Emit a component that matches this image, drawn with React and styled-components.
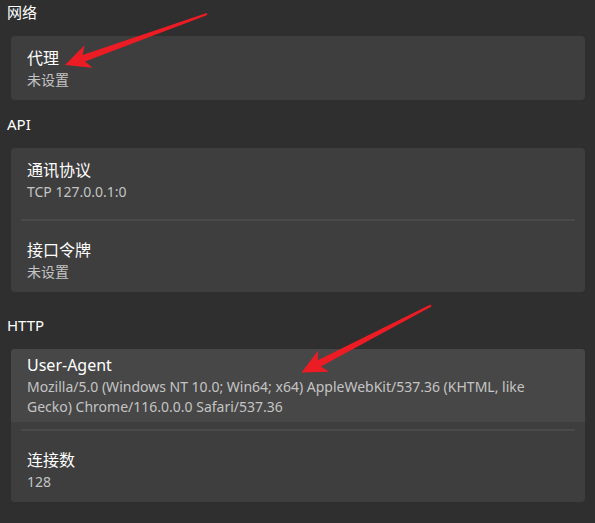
import styled, { createGlobalStyle } from 'styled-components'

const GlobalStyle = createGlobalStyle`
  html, body {
    margin: 0;
    padding: 0;
    background: #2f2f2f;
  }
  body {
    font-family: "Segoe UI", "Noto Sans", "Noto Sans CJK SC", sans-serif;
    -webkit-font-smoothing: antialiased;
  }
`;

const Page = styled.div`
  position: relative;
  width: 595px;
  min-height: 523px;
  box-sizing: border-box;
  padding: 2px 10px 23px 7px;
  display: flex;
  flex-direction: column;
`;

const SectionTitle = styled.div`
  margin: ${p => p.$top || 0}px 0 14px 0;
  font-size: 15px;
  line-height: 20px;
  color: #ffffff;
`;

const Card = styled.div`
  margin-left: 4px;
  background: #3e3e3e;
  border-radius: 4px;
  overflow: hidden;
  display: flex;
  flex-direction: column;
`;

const Item = styled.div`
  min-height: 64px;
  box-sizing: border-box;
  padding: 5px 16px;
  display: flex;
  flex-direction: column;
  justify-content: center;
  background: ${p => (p.$hover ? '#474747' : 'transparent')};
`;

const Title = styled.div`
  font-size: 16px;
  line-height: 22px;
  color: #ffffff;
`;

const Sub = styled.div`
  margin-top: 1px;
  font-size: 14px;
  line-height: 20px;
  color: #c4c4c4;
`;

const Divider = styled.div`
  height: 2px;
  margin: 7px 10px;
  background: #4a4a4a;
`;

const Overlay = styled.svg`
  position: absolute;
  left: 0;
  top: 0;
  pointer-events: none;
`;

// red annotation arrow, tip -> tail
function Arrow({ tip, tail }) {
  const dx = tail[0] - tip[0];
  const dy = tail[1] - tip[1];
  const len = Math.hypot(dx, dy);
  const u = [dx / len, dy / len];
  const n = [-u[1], u[0]];
  const pt = (a, p) =>
    `${(tip[0] + a * u[0] + p * n[0]).toFixed(1)},${(tip[1] + a * u[1] + p * n[1]).toFixed(1)}`;
  const points = [
    pt(0, 0),
    pt(25, -12),
    pt(20, -3.5),
    pt(len, -1),
    pt(len, 1),
    pt(20, 3.5),
    pt(25, 12),
  ].join(' ');
  return <polygon points={points} fill="#ec1c24" />;
}

function Setting({ title, value, hover }) {
  return (
    <Item $hover={hover}>
      <Title>{title}</Title>
      <Sub>{value}</Sub>
    </Item>
  );
}

export default function App() {
  return (
    <>
      <GlobalStyle />
      <Page>
        <SectionTitle>网络</SectionTitle>
        <Card>
          <Setting title="代理" value="未设置" />
        </Card>

        <SectionTitle $top={14}>API</SectionTitle>
        <Card>
          <Setting title="通讯协议" value="TCP 127.0.0.1:0" />
          <Divider />
          <Setting title="接口令牌" value="未设置" />
        </Card>

        <SectionTitle $top={23}>HTTP</SectionTitle>
        <Card>
          <Setting
            hover
            title="User-Agent"
            value="Mozilla/5.0 (Windows NT 10.0; Win64; x64) AppleWebKit/537.36 (KHTML, like Gecko) Chrome/116.0.0.0 Safari/537.36"
          />
          <Divider />
          <Setting title="连接数" value="128" />
        </Card>

        <Overlay width="595" height="523" viewBox="0 0 595 523">
          <Arrow tip={[65, 65]} tail={[207, 14]} />
          <Arrow tip={[301.5, 372.5]} tail={[431, 305.5]} />
        </Overlay>
      </Page>
    </>
  );
}
